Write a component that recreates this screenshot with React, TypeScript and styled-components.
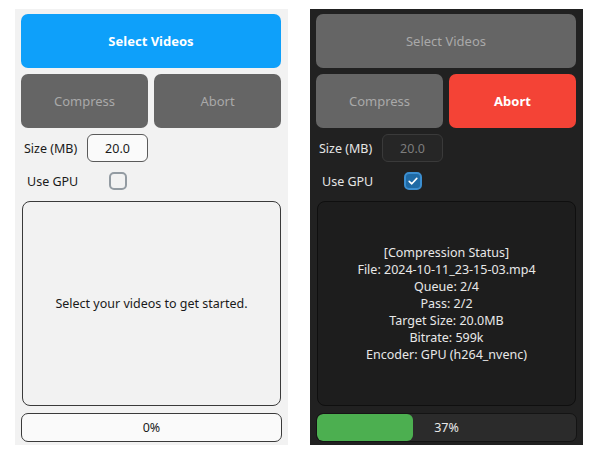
import React from "react";
import styled, { createGlobalStyle, css } from "styled-components";

const Global = createGlobalStyle`
  html, body { margin: 0; padding: 0; background: #ffffff; }
  body { font-family: "Noto Sans", "Open Sans", sans-serif; }
`;

type Mode = { dark?: boolean };

const Stage = styled.div`
  display: flex;
  gap: 22px;
  padding: 9px 0 0 15px;
  height: 463px;
  box-sizing: border-box;
`;

const Panel = styled.div<Mode>`
  width: 273px;
  height: 436px;
  box-sizing: border-box;
  padding: 5px 6px 3px 6px;
  display: flex;
  flex-direction: column;
  background: ${(p) => (p.dark ? "#212121" : "#f2f2f2")};
  color: ${(p) => (p.dark ? "#e6e6e6" : "#1a1a1a")};
  font-size: 12.5px;
`;

type Tone = "blue" | "gray" | "red";

const Button = styled.div<{ tone: Tone; strong?: boolean }>`
  height: 54px;
  border-radius: 7px;
  display: flex;
  align-items: center;
  justify-content: center;
  font-size: 13px;
  font-weight: ${(p) => (p.strong ? 700 : 400)};
  ${(p) =>
    p.tone === "blue" &&
    css`
      background: #0ea0fa;
      color: #ffffff;
    `}
  ${(p) =>
    p.tone === "gray" &&
    css`
      background: #656565;
      color: #a9a9a9;
    `}
  ${(p) =>
    p.tone === "red" &&
    css`
      background: #f44336;
      color: #ffffff;
    `}
`;

const WideButton = styled(Button)`
  margin-right: 1px;
`;

const ButtonRow = styled.div`
  display: grid;
  grid-template-columns: 1fr 1fr;
  gap: 6px;
  margin-top: 6px;
  margin-right: 1px;
`;

const FieldRow = styled.div`
  display: flex;
  align-items: center;
  height: 28px;
  margin-top: 6px;
`;

const SizeLabel = styled.span`
  margin-left: 3px;
  width: 63px;
`;

const SizeInput = styled.div<Mode>`
  width: 61px;
  height: 28px;
  box-sizing: border-box;
  border-radius: 6px;
  display: flex;
  align-items: center;
  justify-content: center;
  ${(p) =>
    p.dark
      ? css`
          background: #262626;
          border: 1.5px solid #3a3a3a;
          color: #7d7d7d;
        `
      : css`
          background: #fafafa;
          border: 1.5px solid #5a5a5a;
          color: #1a1a1a;
        `}
`;

const GpuRow = styled.div`
  display: flex;
  align-items: center;
  height: 28px;
  margin-top: 5px;
`;

const GpuLabel = styled.span`
  margin-left: 6px;
  width: 82px;
`;

const Check = styled.div<{ checked?: boolean }>`
  width: 18px;
  height: 18px;
  box-sizing: border-box;
  border-radius: 5px;
  display: flex;
  align-items: center;
  justify-content: center;
  ${(p) =>
    p.checked
      ? css`
          background: #1f6aa5;
          border: 2px solid #3b8ed0;
        `
      : css`
          background: transparent;
          border: 2px solid #939ba2;
        `}
`;

const StatusBox = styled.div<Mode>`
  margin-top: 6px;
  margin-left: 1px;
  margin-right: 1px;
  height: 205px;
  box-sizing: border-box;
  border-radius: 8px;
  display: flex;
  flex-direction: column;
  align-items: center;
  justify-content: center;
  text-align: center;
  line-height: 17px;
  ${(p) =>
    p.dark
      ? css`
          background: #1d1d1d;
          border: 1.5px solid #0f0f0f;
          color: #e8e8e8;
        `
      : css`
          background: #f2f2f2;
          border: 1.5px solid #3a3a3a;
          color: #1a1a1a;
        `}
`;

const Progress = styled.div<Mode>`
  position: relative;
  margin-top: 7px;
  height: 29px;
  box-sizing: border-box;
  border-radius: 7px;
  overflow: hidden;
  display: flex;
  align-items: center;
  justify-content: center;
  ${(p) =>
    p.dark
      ? css`
          background: #2b2b2b;
          border: 1.5px solid #141414;
          color: #e8e8e8;
        `
      : css`
          background: #fafafa;
          border: 1.5px solid #3a3a3a;
          color: #1a1a1a;
        `}
`;

const Fill = styled.div`
  position: absolute;
  left: 0;
  top: 0;
  bottom: 0;
  background: #4caf50;
  border-radius: 6px;
`;

const ProgressText = styled.span`
  position: relative;
`;

const CheckMark = () => (
  <svg width="12" height="12" viewBox="0 0 12 12">
    <path d="M2.2 6.4 L4.8 8.8 L9.8 3.4" fill="none" stroke="#ffffff" strokeWidth="1.6" strokeLinecap="round" strokeLinejoin="round" />
  </svg>
);

const statusLines = [
  "[Compression Status]",
  "File: 2024-10-11_23-15-03.mp4",
  "Queue: 2/4",
  "Pass: 2/2",
  "Target Size: 20.0MB",
  "Bitrate: 599k",
  "Encoder: GPU (h264_nvenc)",
];

export default function App() {
  const pct = 37;
  return (
    <>
      <Global />
      <Stage>
        <Panel>
          <WideButton tone="blue" strong>Select Videos</WideButton>
          <ButtonRow>
            <Button tone="gray">Compress</Button>
            <Button tone="gray">Abort</Button>
          </ButtonRow>
          <FieldRow>
            <SizeLabel>Size (MB)</SizeLabel>
            <SizeInput>20.0</SizeInput>
          </FieldRow>
          <GpuRow>
            <GpuLabel>Use GPU</GpuLabel>
            <Check />
          </GpuRow>
          <StatusBox>Select your videos to get started.</StatusBox>
          <Progress>
            <ProgressText>0%</ProgressText>
          </Progress>
        </Panel>
        <Panel dark>
          <WideButton tone="gray">Select Videos</WideButton>
          <ButtonRow>
            <Button tone="gray">Compress</Button>
            <Button tone="red" strong>Abort</Button>
          </ButtonRow>
          <FieldRow>
            <SizeLabel>Size (MB)</SizeLabel>
            <SizeInput dark>20.0</SizeInput>
          </FieldRow>
          <GpuRow>
            <GpuLabel>Use GPU</GpuLabel>
            <Check checked>
              <CheckMark />
            </Check>
          </GpuRow>
          <StatusBox dark>
            {statusLines.map((l) => (
              <div key={l}>{l}</div>
            ))}
          </StatusBox>
          <Progress dark>
            <Fill style={{ width: `${pct}%` }} />
            <ProgressText>{pct}%</ProgressText>
          </Progress>
        </Panel>
      </Stage>
    </>
  );
}
